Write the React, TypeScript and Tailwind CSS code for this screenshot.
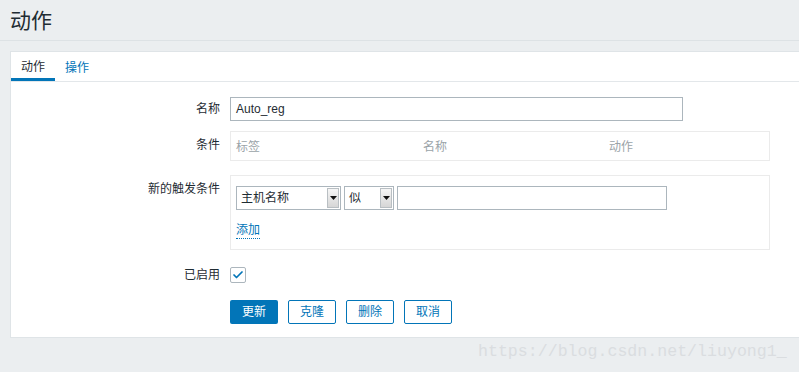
import { Check } from "lucide-react";

const cjk = "font-['Liberation_Sans','Noto_Sans_CJK_SC',sans-serif]";

const SelectBox = ({ text, width }: { text: string; width: string }) => (
   <div className={`flex h-[24px] items-stretch border border-[#acb6bd] bg-white ${width}`}>
      <span className="flex flex-1 items-center pl-[4px] text-[12px] text-[#1f2c33]">{text}</span>
      <span className="my-[1px] mr-[1px] flex w-[12px] items-center justify-center border border-[#b9bfc3] bg-gradient-to-b from-[#f6f6f6] to-[#d6d6d6]">
         <svg width="7" height="4" viewBox="0 0 7 4">
            <path d="M0 0h7L3.5 4z" fill="#111" />
         </svg>
      </span>
   </div>
);

const Row = ({ label, children, top }: { label: string; children: React.ReactNode; top?: boolean }) => (
   <div className={`flex ${top ? "items-start" : "items-center"}`}>
      <div className={`w-[209px] shrink-0 text-right text-[12px] text-[#1f2c33] ${top ? "pt-[5px]" : ""}`}>
         {label}
      </div>
      <div className="ml-[10px] flex-1">{children}</div>
   </div>
);

const App = () => {
   const buttons = ["克隆", "删除", "取消"];

   return (
      <div className={`relative h-[372px] w-[799px] overflow-hidden bg-[#ebeef0] ${cjk}`}>
         <header className="flex h-[41px] items-center border-b border-[#dde2e5] pl-[10px]">
            <h1 className="text-[21px] leading-none text-[#1f2c33]">动作</h1>
         </header>

         <div className="ml-[10px] mt-[10px] h-[287px] border border-r-0 border-[#dfe4e7] bg-white">
            <div className="flex h-[30px] border-b border-[#e3e7ea] text-[12px]">
               <div className="flex w-[44px] items-center justify-center border-b-[3px] border-[#0275b8] pt-[3px] text-[#1f2c33]">
                  动作
               </div>
               <div className="flex w-[44px] items-center justify-center pt-[3px] text-[#0275b8]">操作</div>
            </div>

            <div className="flex flex-col pt-[15px]">
               <Row label="名称">
                  <div className="flex h-[24px] w-[453px] items-center border border-[#acb6bd] pl-[5px] text-[12px] text-[#1f2c33]">
                     Auto_reg
                  </div>
               </Row>

               <div className="mt-[10px]">
                  <Row label="条件" top>
                     <div className="flex h-[30px] w-[540px] items-center border border-[#ebebeb] text-[12px] text-[#9aa3a8]">
                        <span className="w-[186px] pl-[5px] pt-[2px]">标签</span>
                        <span className="w-[186px] pl-[6px] pt-[2px]">名称</span>
                        <span className="pl-[6px] pt-[2px]">动作</span>
                     </div>
                  </Row>
               </div>

               <div className="mt-[14px]">
                  <Row label="新的触发条件" top>
                     <div className="h-[75px] w-[540px] border border-[#ebebeb] pl-[5px] pt-[10px]">
                        <div className="flex gap-[3px]">
                           <SelectBox text="主机名称" width="w-[105px]" />
                           <SelectBox text="似" width="w-[50px]" />
                           <div className="h-[24px] w-[270px] border border-[#acb6bd]" />
                        </div>
                        <span className="mt-[13px] inline-block border-b border-dotted border-[#0275b8] text-[12px] leading-[15px] text-[#0275b8]">
                           添加
                        </span>
                     </div>
                  </Row>
               </div>

               <div className="mt-[16px]">
                  <Row label="已启用">
                     <div className="flex h-[16px] w-[16px] items-center justify-center rounded-[2px] border border-[#acb6bd]">
                        <Check className="h-[12px] w-[12px] text-[#0275b8]" strokeWidth={3.5} />
                     </div>
                  </Row>
               </div>

               <div className="ml-[219px] mt-[16px] flex gap-[10px] text-[12px]">
                  <button className="h-[24px] w-[48px] rounded-[2px] bg-[#0275b8] text-white">更新</button>
                  {buttons.map((b) => (
                     <button
                        key={b}
                        className="h-[24px] w-[48px] rounded-[2px] border border-[#0275b8] bg-white text-[#0275b8]"
                     >
                        {b}
                     </button>
                  ))}
               </div>
            </div>
         </div>

         <div className="absolute left-[478px] top-[342px] font-['Liberation_Mono',monospace] text-[16.6px] leading-[20px] text-[#dadde0]">
            https://blog.csdn.net/liuyong1_
         </div>
      </div>
   );
};

export default App;
